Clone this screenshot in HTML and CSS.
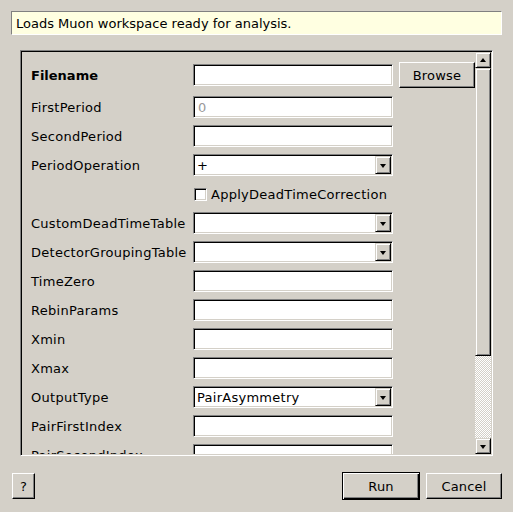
FILE: index.html
```html
<!DOCTYPE html>
<html>
<head>
<meta charset="utf-8">
<link rel="stylesheet" href="styles.css">
</head>
<body>
<div class="dialog">
  <div class="desc">Loads Muon workspace ready for analysis.</div>
  <div class="frame">
    <div class="viewport">
      <div class="form">
        <div class="lbl bold row1">Filename</div>
        <div class="field row1"><div class="input"></div></div>
        <div class="row1"><div class="btn browse">Browse</div></div>

        <div class="lbl">FirstPeriod</div>
        <div class="field"><div class="input"><span class="ph">0</span></div></div>
        <div></div>

        <div class="lbl">SecondPeriod</div>
        <div class="field"><div class="input"></div></div>
        <div></div>

        <div class="lbl">PeriodOperation</div>
        <div class="field"><div class="input combo"><span class="val">+</span><span class="drop"><i class="tri-down"></i></span></div></div>
        <div></div>

        <div class="lbl"></div>
        <div class="field check"><span class="box"></span><span class="clabel">ApplyDeadTimeCorrection</span></div>
        <div></div>

        <div class="lbl">CustomDeadTimeTable</div>
        <div class="field"><div class="input combo"><span class="val"></span><span class="drop"><i class="tri-down"></i></span></div></div>
        <div></div>

        <div class="lbl">DetectorGroupingTable</div>
        <div class="field"><div class="input combo"><span class="val"></span><span class="drop"><i class="tri-down"></i></span></div></div>
        <div></div>

        <div class="lbl">TimeZero</div>
        <div class="field"><div class="input"></div></div>
        <div></div>

        <div class="lbl">RebinParams</div>
        <div class="field"><div class="input"></div></div>
        <div></div>

        <div class="lbl">Xmin</div>
        <div class="field"><div class="input"></div></div>
        <div></div>

        <div class="lbl">Xmax</div>
        <div class="field"><div class="input"></div></div>
        <div></div>

        <div class="lbl">OutputType</div>
        <div class="field"><div class="input combo"><span class="val">PairAsymmetry</span><span class="drop"><i class="tri-down"></i></span></div></div>
        <div></div>

        <div class="lbl">PairFirstIndex</div>
        <div class="field"><div class="input"></div></div>
        <div></div>

        <div class="lbl">PairSecondIndex</div>
        <div class="field"><div class="input"></div></div>
        <div></div>
      </div>
    </div>
    <div class="vscroll">
      <div class="sbtn"><i class="tri-up"></i></div>
      <div class="thumb"></div>
      <div class="track"></div>
      <div class="sbtn"><i class="tri-down"></i></div>
    </div>
  </div>
  <div class="footer">
    <div class="btn help">?</div>
    <div class="spacer"></div>
    <div class="btn default">Run</div>
    <div class="btn cancel">Cancel</div>
  </div>
</div>
</body>
</html>
```
FILE: styles.css
```css
html, body {
  margin: 0;
  padding: 0;
  background: #d4d0c8;
}
body {
  width: 513px;
  height: 512px;
  overflow: hidden;
  font-family: "DejaVu Sans", sans-serif;
  font-size: 13px;
  color: #000;
}
.dialog {
  padding: 11px 11px 0 11px;
  display: flex;
  flex-direction: column;
}
.desc {
  height: 22px;
  line-height: 23px;
  background: #ffffe1;
  border: 1px solid;
  border-color: #808080 #ffffff #ffffff #808080;
  padding-left: 4px;
  white-space: nowrap;
}
.frame {
  margin: 15px 9px 0 9px;
  height: 402px;
  border: 1px solid;
  border-color: #808080 #ffffff #ffffff #808080;
  box-shadow: inset 1px 1px #000, inset -1px -1px #d4d0c8;
  padding: 1px;
  display: flex;
}
.viewport {
  flex: 1;
  overflow: hidden;
  height: 402px;
}
.form {
  display: grid;
  grid-template-columns: 156px 200px 76px;
  column-gap: 6px;
  row-gap: 7px;
  grid-auto-rows: 22px;
  grid-template-rows: 27px;
  padding: 10px 0 0 9px;
  align-items: center;
  letter-spacing: 0.27px;
}
.lbl {
  white-space: nowrap;
  line-height: 22px;
  padding-top: 2px;
}
.lbl.row1 { align-self: start; line-height: 26px; padding-top: 1px; letter-spacing: 0; }
.field.row1 { align-self: start; padding-top: 2px; }
.row1 { align-self: start; }
.bold { font-weight: bold; }
.input {
  box-sizing: border-box;
  height: 22px;
  width: 200px;
  background: #fff;
  border: 1px solid;
  border-color: #808080 #ffffff #ffffff #808080;
  box-shadow: inset 1px 1px #000, inset -1px -1px #d4d0c8;
  padding: 2px 2px 0 3px;
  line-height: 18px;
  display: flex;
  align-items: center;
}
.ph { color: #9a9a9a; padding-left: 1px; }
.combo { padding-right: 1px; padding-top: 1px; padding-bottom: 1px; }
.combo .val { flex: 1; white-space: nowrap; padding-top: 1px; }
.drop {
  box-sizing: border-box;
  width: 16px;
  height: 18px;
  background: #d4d0c8;
  border: 1px solid;
  border-color: #d4d0c8 #000 #000 #d4d0c8;
  box-shadow: inset 1px 1px #fff, inset -1px -1px #808080;
  display: flex;
  align-items: center;
  justify-content: center;
}
.tri-down {
  width: 0;
  height: 0;
  border-left: 3.5px solid transparent;
  border-right: 3.5px solid transparent;
  border-top: 4px solid #000;
  margin-top: 1px;
}
.tri-up {
  width: 0;
  height: 0;
  border-left: 3.5px solid transparent;
  border-right: 3.5px solid transparent;
  border-bottom: 4px solid #000;
  margin-top: -1px;
}
.check {
  display: flex;
  align-items: center;
  height: 22px;
  padding-left: 1px;
}
.check .box {
  box-sizing: border-box;
  width: 13px;
  height: 13px;
  background: #fff;
  border: 1px solid;
  border-color: #808080 #ffffff #ffffff #808080;
  box-shadow: inset 1px 1px #000, inset -1px -1px #d4d0c8;
  margin-right: 4px;
}
.clabel { padding-top: 1px; }
.btn {
  box-sizing: border-box;
  height: 26px;
  background: #d4d0c8;
  border: 1px solid;
  border-color: #ffffff #000 #000 #ffffff;
  box-shadow: inset -1px -1px #808080;
  display: flex;
  align-items: center;
  justify-content: center;
  white-space: nowrap;
  letter-spacing: 0.2px;
}
.browse { width: 76px; }
.vscroll {
  width: 16px;
  height: 402px;
  display: flex;
  flex-direction: column;
}
.sbtn {
  box-sizing: border-box;
  width: 16px;
  height: 16px;
  background: #d4d0c8;
  border: 1px solid;
  border-color: #d4d0c8 #000 #000 #d4d0c8;
  box-shadow: inset 1px 1px #fff, inset -1px -1px #808080;
  display: flex;
  align-items: center;
  justify-content: center;
}
.thumb {
  box-sizing: border-box;
  height: 288px;
  background: #d4d0c8;
  border: 1px solid;
  border-color: #d4d0c8 #000 #000 #d4d0c8;
  box-shadow: inset 1px 1px #fff, inset -1px -1px #808080;
}
.track {
  flex: 1;
  background: repeating-conic-gradient(#ffffff 0 25%, #d4d0c8 0 50%) 0 0 / 2px 2px;
}
.footer {
  display: flex;
  align-items: center;
  margin-top: 16px;
  height: 28px;
}
.help { width: 23px; margin-left: 1px; }
.spacer { flex: 1; }
.default {
  width: 78px;
  height: 28px;
  border: 1px solid #000;
  box-shadow: inset 1px 1px #fff, inset -1px -1px #000, inset -2px -2px #808080;
  margin-right: 6px;
}
.cancel { width: 76px; }
```
